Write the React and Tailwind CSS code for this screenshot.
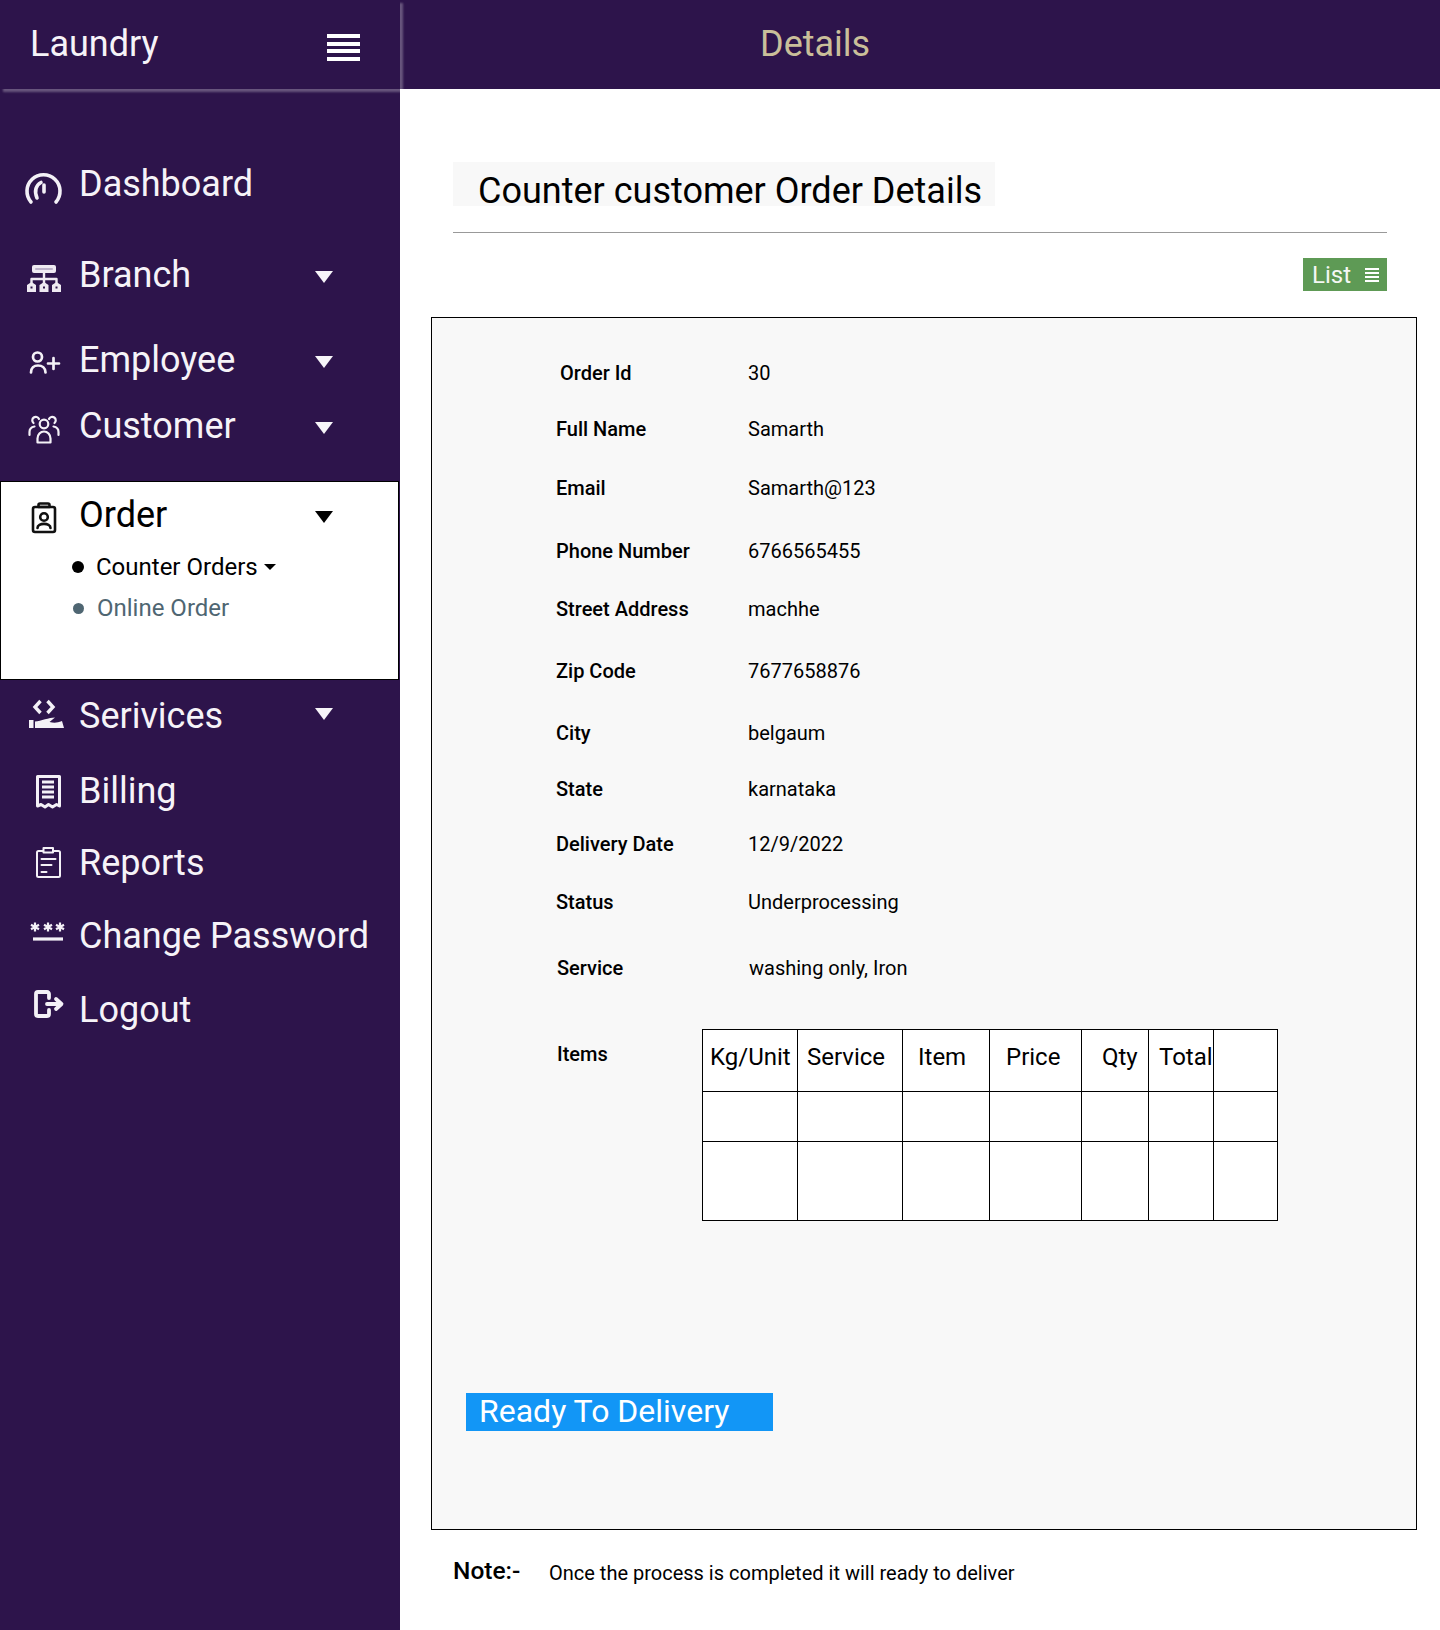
import React from "react";

const W = "#f4f1f7";
const P = "#2d144b";

const Svg = ({ children }) => (
  <svg width="36" height="36" viewBox="0 0 36 36" fill="none" strokeLinecap="round" strokeLinejoin="round" className="shrink-0 overflow-visible">
    {children}
  </svg>
);

const Star = ({ x, y }) => (
  <path d={`M${x} ${y - 4.5}v9M${x - 4} ${y - 2.2}l8 4.400M${x + 4} ${y - 2.2}l-8 4.400`} stroke={W} strokeWidth="2.200" strokeLinecap="butt" />
);

const icons = {
  dash: (
    <Svg>
      <g stroke={W} strokeWidth="3.600">
        <path d="M5 36A16.500 16.500 0 1 1 30 36" />
        <path d="M11 32C8 25 10 19 15 16.500" />
        <path d="M18 19v7" />
      </g>
    </Svg>
  ),
  branch: (
    <Svg>
      <rect x="6" y="8" width="24" height="8" rx="2" fill="#efeaf2" />
      <path d="M10 12h16" stroke="#bdb2ca" strokeWidth="2" />
      <path d="M18 16v11M5.500 27v-5h25v5" stroke="#efeaf2" strokeWidth="2.400" />
      <path d="M1 28l4.500-3 4.500 3v7H1zM13.500 28l4.500-3 4.500 3v7h-9zM26 28l4.500-3 4.500 3v7h-9z" fill="#efeaf2" />
      <path d="M4.500 29.500h2v2h-2zM17 29.500h2v2h-2zM29.500 29.500h2v2h-2z" fill={P} />
    </Svg>
  ),
  emp: (
    <Svg>
      <g stroke={W} strokeWidth="2.700">
        <circle cx="11.500" cy="15" r="4.500" />
        <path d="M5 30.500C5 26 8 23.500 12 23.500S19.500 26 19.500 30.500" />
        <path d="M22 21.500h11M27.500 16v11" />
      </g>
    </Svg>
  ),
  cust: (
    <Svg>
      <g stroke={W} strokeWidth="2.200">
        <circle cx="18" cy="16" r="4.300" />
        <path d="M11.500 34.500v-4c0-4 3-7 6.500-7s6.500 3 6.500 7v4z" />
        <path d="M7.500 15a3.500 3.500 0 1 1 5.500-4M28.500 15a3.500 3.500 0 1 0-5.500-4" />
        <path d="M3.500 27v-3c0-3 2-5 5-5.500M32.500 27v-3c0-3-2-5-5-5.500" />
      </g>
    </Svg>
  ),
  order: (
    <Svg>
      <g stroke="#111" strokeWidth="2.600">
        <rect x="7" y="10" width="22" height="25" rx="2" />
        <path d="M12.500 10V8a1.500 1.500 0 0 1 1.500-1.500h8A1.500 1.500 0 0 1 23.500 8v2z" />
        <circle cx="18" cy="20" r="3.800" />
        <path d="M11.500 31c0-5.500 13-5.500 13 0" />
      </g>
    </Svg>
  ),
  serv: (
    <Svg>
      <path d="M14.500 3L9 9l5.500 6M21.500 3L27 9l-5.500 6" stroke={W} strokeWidth="3.400" strokeLinecap="butt" strokeLinejoin="miter" />
      <path d="M3 22h4.500v8H3zM9 23.500C15 23 23 19.500 29 19.500L23.500 24C28 25 31 25 36 23L38 30H9Z" fill={W} />
    </Svg>
  ),
  bill: (
    <Svg>
      <path d="M11.500 3.500h22V33l-3-1.500-4 2.500-4-2.500-3.500 2.500-4-2.500-3.500 1.500z" stroke={W} strokeWidth="3" />
      <path d="M16 9h12M16 14h12M16 19h12M16 24h12" stroke={W} strokeWidth="3" strokeLinecap="butt" />
    </Svg>
  ),
  rep: (
    <Svg>
      <g stroke={W} strokeWidth="2">
        <rect x="11" y="6" width="23" height="26" rx="1.500" />
        <path d="M17.500 7.500V3h9.500v4.500z" fill={P} />
        <path d="M15.500 14h14M15.500 20h10M15.500 27h5" />
      </g>
    </Svg>
  ),
  pass: (
    <Svg>
      <Star x={9} y={9} />
      <Star x={22} y={9} />
      <Star x={34} y={9} />
      <path d="M7 21h30" stroke={W} strokeWidth="3.200" strokeLinecap="butt" />
    </Svg>
  ),
  out: (
    <Svg>
      <path d="M23 6V2a2 2 0 0 0-2-2H12a2 2 0 0 0-2 2v20a2 2 0 0 0 2 2h9a2 2 0 0 0 2-2v-4" stroke={W} strokeWidth="3.800" />
      <path d="M21 12h14M30 7l5.500 5-5.500 5" stroke={W} strokeWidth="3.800" />
    </Svg>
  ),
};

const NavRow = ({ icon, label, caret, mt, caretPos = "top-[17px]" }) => (
  <div className={`relative flex items-center h-[44px] pl-[26px] text-[36px] text-[#f6f3f8] ${mt}`}>
    <span className="w-[36px] mr-[17px] flex justify-center">{icons[icon]}</span>
    <span className="leading-[44px] whitespace-nowrap">{label}</span>
    {caret && (
      <svg width="20" height="14" viewBox="0 0 20 14" className={`absolute left-[314px] ${caretPos}`}>
        <path d="M1 1h18L10 13z" fill="#f7f5f9" />
      </svg>
    )}
  </div>
);

const rows = [
  ["Order Id", "30", "mt-[41px]", "pl-[4px]", ""],
  ["Full Name", "Samarth", "mt-[28px]", "", ""],
  ["Email", "Samarth@123", "mt-[31px]", "", ""],
  ["Phone Number", "6766565455", "mt-[35px]", "", ""],
  ["Street Address", "machhe", "mt-[30px]", "", ""],
  ["Zip Code", "7677658876", "mt-[34px]", "", ""],
  ["City", "belgaum", "mt-[34px]", "", ""],
  ["State", "karnataka", "mt-[28px]", "", ""],
  ["Delivery Date", "12/9/2022", "mt-[27px]", "", ""],
  ["Status", "Underprocessing", "mt-[30px]", "", ""],
  ["Service", "washing only, Iron", "mt-[38px]", "pl-[1px]", "ml-[1px]"],
];

const cols = [
  ["Kg/Unit", "w-[95px]", "pl-[7px]"],
  ["Service", "w-[105px]", "pl-[9px]"],
  ["Item", "w-[87px]", "pl-[15px]"],
  ["Price", "w-[92px]", "pl-[16px]"],
  ["Qty", "w-[67px]", "pl-[20px]"],
  ["Total", "w-[65px]", "pl-[10px]"],
  ["", "w-[64px]", ""],
];

export default function App() {
  return (
    <div className="flex w-[1440px] h-[1630px] bg-white overflow-hidden font-['Roboto',sans-serif] text-black">
      <aside className="w-[400px] shrink-0 bg-[#2d144b]">
        <div className="relative z-10 h-[89px] flex items-start justify-between pl-[30px] pr-[40px] shadow-[3px_3px_2px_rgba(255,255,255,0.28)]">
          <span className="mt-[22px] text-[36px] leading-[44px] text-[#f6f3f8]">Laundry</span>
          <div className="mt-[34px] w-[33px] flex flex-col gap-[3.500px]">
            <div className="h-[4px] bg-white" />
            <div className="h-[4px] bg-white" />
            <div className="h-[4px] bg-white" />
            <div className="h-[4px] bg-white" />
          </div>
        </div>
        <nav>
          <NavRow icon="dash" label="Dashboard" mt="mt-[73px]" />
          <div className="relative">
            <span className="absolute left-[106px] top-[32px] w-[4px] h-[2px] rounded-full bg-black" />
            <NavRow icon="branch" label="Branch" caret mt="mt-[47px]" />
          </div>
          <NavRow icon="emp" label="Employee" caret mt="mt-[41px]" />
          <NavRow icon="cust" label="Customer" caret mt="mt-[22px]" />
          <div className="mt-[33px] w-[399px] h-[199px] bg-white border border-black">
            <div className="relative flex items-center h-[44px] mt-[11px] pl-[25px] text-[36px] text-black">
              <span className="w-[36px] mr-[17px] flex justify-center">{icons.order}</span>
              <span className="leading-[44px]">Order</span>
              <svg width="20" height="14" viewBox="0 0 20 14" className="absolute left-[313px] top-[17px]">
                <path d="M1 1h18L10 13z" fill="#000" />
              </svg>
            </div>
            <div className="mt-[15px] ml-[71px] flex items-center h-[30px] text-[24px] leading-[30px] text-black">
              <span className="w-[12px] h-[12px] rounded-full bg-black mr-[12px]" />
              <span>Counter Orders</span>
              <span className="ml-[6px] w-0 h-0 border-x-[6px] border-x-transparent border-t-[6px] border-t-black" />
            </div>
            <div className="mt-[11px] ml-[72px] flex items-center h-[30px] text-[24px] leading-[30px] text-[#4f6672]">
              <span className="w-[11px] h-[11px] rounded-full bg-[#4f6672] mr-[13px]" />
              <span>Online Order</span>
            </div>
          </div>
          <NavRow icon="serv" label="Serivices" caret caretPos="top-[13px]" mt="mt-[14px]" />
          <NavRow icon="bill" label="Billing" mt="mt-[31px]" />
          <NavRow icon="rep" label="Reports" mt="mt-[28px]" />
          <NavRow icon="pass" label="Change Password" mt="mt-[29px]" />
          <NavRow icon="out" label="Logout" mt="mt-[30px]" />
        </nav>
      </aside>

      <main className="flex-1 min-w-0">
        <header className="h-[89px] bg-[#2d144b] flex justify-start">
          <span className="ml-[360px] mt-[22px] text-[36px] leading-[44px] text-[#cabf9a]">Details</span>
        </header>

        <div className="mt-[73px] ml-[53px] w-[542px] h-[44px] bg-[#f8f8f8] pl-[25px] pt-[7px] text-[36px] leading-[44px] whitespace-nowrap">
          Counter customer Order Details
        </div>
        <div className="mt-[26px] ml-[53px] w-[934px] h-px bg-[#999999]" />
        <div className="mt-[25px] ml-[903px] w-[84px] h-[33px] bg-[#5e9a55] flex items-center pl-[9px] text-[24px] text-[#f4f7f3]">
          <span className="leading-[35px] h-[33px]">List</span>
          <span className="ml-[14px] w-[14px] flex flex-col gap-[2px]">
            <span className="h-[2px] bg-white" />
            <span className="h-[2px] bg-white" />
            <span className="h-[2px] bg-white" />
            <span className="h-[2px] bg-white" />
          </span>
        </div>

        <section className="mt-[26px] ml-[31px] w-[986px] h-[1213px] bg-[#f8f8f8] border border-black">
          <div className="pl-[124px]">
            {rows.map(([l, v, mt, pad, vm]) => (
              <div key={l} className={`flex items-center h-[28px] text-[20px] leading-[28px] ${mt}`}>
                <span className={`w-[192px] font-medium whitespace-nowrap ${pad}`}>{l}</span>
                <span className={`whitespace-nowrap ${vm}`}>{v}</span>
              </div>
            ))}
            <div className="mt-[47px] flex items-start">
              <span className="w-[146px] mt-[11px] pl-[1px] h-[28px] text-[20px] leading-[28px] font-medium">Items</span>
              <table className="table-fixed w-[575px] h-[191px] border-collapse bg-white text-[24px]">
                <tbody>
                  <tr className="h-[62px]">
                    {cols.map(([c, w, p], i) => (
                      <td key={i} className={`border border-black ${w} ${p} pb-[8px] whitespace-nowrap overflow-hidden align-middle leading-[30px]`}>{c}</td>
                    ))}
                  </tr>
                  <tr className="h-[50px]">
                    {cols.map(([c, w], i) => <td key={i} className={`border border-black ${w}`} />)}
                  </tr>
                  <tr className="h-[79px]">
                    {cols.map(([c, w], i) => <td key={i} className={`border border-black ${w}`} />)}
                  </tr>
                </tbody>
              </table>
            </div>
          </div>
          <div className="mt-[172px] ml-[34px] w-[307px] h-[38px] bg-[#1296f6] pl-[13px] text-[32px] leading-[36px] text-white whitespace-nowrap">
            Ready To Delivery
          </div>
        </section>

        <div className="mt-[28px] ml-[53px] flex items-center h-[28px]">
          <span className="w-[96px] text-[24.500px] font-medium leading-[28px] mb-[2px]">Note:-</span>
          <span className="text-[20px] leading-[28px] whitespace-nowrap mt-[2px]">Once the process is completed it will ready to deliver</span>
        </div>
      </main>
    </div>
  );
}
